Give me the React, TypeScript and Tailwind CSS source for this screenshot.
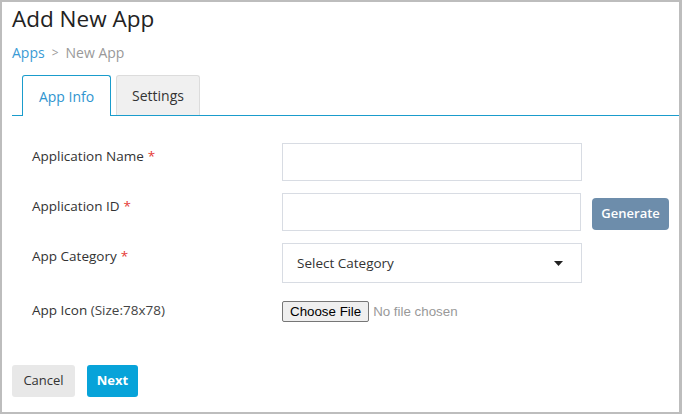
import React from 'react';

const Label: React.FC<{ text: string; required?: boolean; extra?: string }> = ({ text, required, extra }) => (
    <div className="w-[270px] pl-[20px] text-[13.5px] text-[#333]">
        {text}
        {extra && <span className="text-[#444]"> {extra}</span>}
        {required && <span className="text-[#e53935] ml-[4px]">*</span>}
    </div>
);

const App: React.FC = () => {
    return (
        <div className="w-[682px] h-[414px] bg-[#bdbdbd] pl-[2px] pt-[2px] pr-[3px] pb-[2px]" style={{ fontFamily: '"Open Sans", "Noto Sans", sans-serif' }}>
            <div className="w-full h-full bg-white px-[10px]">
                {/* Header */}
                <h1 className="text-[22.5px] leading-[32px] text-[#222] pt-[1px]">Add New App</h1>
                <div className="mt-[9px] flex items-center text-[14px] leading-[18px]">
                    <span className="text-[#3a9bd5]">Apps</span>
                    <span className="text-[#999] mx-[7px] text-[12px]">&gt;</span>
                    <span className="text-[#999]">New App</span>
                </div>

                {/* Tabs */}
                <div className="mt-[13px] -mr-[10px] flex items-end border-b border-[#1a9ccc] pl-[10px] gap-[5px] h-[41px]">
                    <div className="h-[41px] w-[89px] -mb-px bg-white border border-b-0 border-[#1a9ccc] rounded-t-[3px] flex items-center justify-center text-[14px] text-[#2f95cf]">
                        App Info
                    </div>
                    <div className="h-[40px] w-[84px] bg-[#f0f0f0] border border-b-0 border-[#dcdcdc] rounded-t-[3px] flex items-center justify-center text-[14px] text-[#333]">
                        Settings
                    </div>
                </div>

                {/* Form */}
                <div className="mt-[27px] flex flex-col gap-[12px]">
                    <div className="flex items-start">
                        <div className="pt-[3px]"><Label text="Application Name" required /></div>
                        <input className="w-[300px] h-[38px] border border-[#d8dce3] outline-none" />
                    </div>
                    <div className="flex items-start">
                        <div className="pt-[3px]"><Label text="Application ID" required /></div>
                        <input className="w-[300px] h-[38px] border border-[#d8dce3] outline-none" />
                        <button className="ml-[11px] mt-[5px] w-[77px] h-[32px] rounded-[4px] bg-[#6d8dab] text-white text-[13px] font-semibold">
                            Generate
                        </button>
                    </div>
                    <div className="flex items-start">
                        <div className="pt-[3px]"><Label text="App Category" required /></div>
                        <div className="w-[300px] h-[40px] border border-[#d8dce3] flex items-center justify-between pl-[14px] pr-[18px] text-[13.5px] text-[#333]">
                            <span>Select Category</span>
                            <svg width="9" height="5" viewBox="0 0 9 5"><path d="M0 0h9L4.5 5z" fill="#222" /></svg>
                        </div>
                    </div>
                    <div className="flex items-center mt-[6px]">
                        <div className="-mt-[3px]"><Label text="App Icon" extra="(Size:78x78)" /></div>
                        <div className="flex items-center text-[13.33px]" style={{ fontFamily: '"Liberation Sans", Arial, sans-serif' }}>
                            <span className="h-[21px] px-[7px] flex items-center border border-[#767676] rounded-[2px] bg-[#efefef] text-black">Choose File</span>
                            <span className="ml-[4px] text-[#999]">No file chosen</span>
                        </div>
                    </div>
                </div>

                {/* Actions */}
                <div className="mt-[43px] flex items-center gap-[12px]">
                    <button className="w-[63px] h-[32px] rounded-[3px] bg-[#e8e8e8] text-[13px] text-[#333]">Cancel</button>
                    <button className="w-[51px] h-[32px] rounded-[3px] bg-[#07a3d9] text-[13px] text-white font-bold">Next</button>
                </div>
            </div>
        </div>
    );
};

export default App;
